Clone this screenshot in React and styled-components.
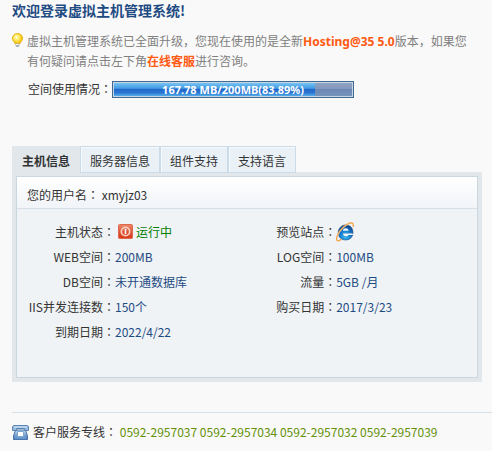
import React, { useState } from "react";
import styled, { createGlobalStyle } from "styled-components";

const GlobalStyle = createGlobalStyle`
  * { box-sizing: border-box; }
  body {
    margin: 0;
    background: #f9f9f9;
    color: #333;
    font: 12px/20px "Noto Sans CJK SC", sans-serif;
  }
`;

const Page = styled.main`
  padding: 0 0 8px 12px;
`;

const Title = styled.h1`
  margin: 0;
  color: #1f4b83;
  font-size: 14px;
  line-height: 20px;
`;

const Hint = styled.div`
  display: flex;
  gap: 4px;
  margin: 11px 20px 0 0;
  color: #808080;

  svg { flex: none; margin-top: 2px; }
  p { margin: 0; }
`;

const Highlight = styled.strong`
  color: #ff5a12;
  font-family: "Noto Sans", "Noto Sans CJK SC", sans-serif;
  line-height: 1;
`;

const HighlightLink = styled.a`
  color: #ff5a12;
  font-weight: bold;
  text-decoration: none;
`;

const ColonMark = styled.span`
  font-family: "Noto Sans CJK TC", sans-serif;
`;

const Colon = () => <ColonMark lang="zh-TW">：</ColonMark>;

const Usage = styled.div`
  display: flex;
  align-items: center;
  padding: 8px 0 0 16px;
`;

const Bar = styled.div`
  display: grid;
  width: 242px;
  height: 17px;
  border: 1px solid #416a93;
  background: linear-gradient(#93a5c3, #8299bd 45%, #6b88b3 50%, #7898be);
  box-shadow: inset 0 0 0 1px #c5d5e3;
`;

const BarFill = styled.div`
  grid-area: 1 / 1;
  margin: 1px;
  background: linear-gradient(#77c3f2, #439ce3 40%, #2369ca 50%, #2b76d2 75%, #55aee9);
`;

const BarText = styled.div`
  grid-area: 1 / 1;
  color: #fff;
  font: bold 11px/15px "Noto Sans", sans-serif;
  text-align: center;
  z-index: 1;
`;

const Tabs = styled.div`
  display: flex;
  margin-top: 47px;
`;

const Tab = styled.button`
  height: 27px;
  padding: 2px 9px 0;
  border: 1px solid ${(p) => (p.$active ? "#e1e7eb" : "#cbdce8")};
  background: ${(p) => (p.$active ? "#e1e7eb" : "#e9f1f7")};
  box-shadow: ${(p) => (p.$active ? "none" : "inset 1px 1px 0 #f7fafc")};
  color: #333;
  font: inherit;
  font-weight: ${(p) => (p.$active ? "bold" : "normal")};
  cursor: pointer;
`;

const Panel = styled.section`
  margin-right: 10px;
  padding: 4px;
  margin-top: -1px;
  background: #e1e7eb;
`;

const PanelBody = styled.div`
  min-height: 202px;
  border: 1px solid #cbd7df;
  background: #eff3f6;
`;

const UserRow = styled.div`
  padding: 8px 10px 3px;
  border-bottom: 1px solid #d7e0e9;
  background: linear-gradient(#fff, #f1f4f8);
`;

const Details = styled.dl`
  display: grid;
  grid-template-columns: 98px 7fr 98px 8fr;
  grid-auto-rows: 25px;
  align-items: center;
  margin: 0;
  padding: 10px 0 0;
  white-space: nowrap;
`;

const Label = styled.dt`
  text-align: right;
`;

const Value = styled.dd`
  display: flex;
  align-items: center;
  gap: 3px;
  margin: 0;
  padding-left: ${(p) => (p.$icon ? "3px" : "0")};
  color: ${(p) => (p.$running ? "#008000" : "#1f4b83")};
`;

const SiteLink = styled.a`
  display: flex;
`;

const Footer = styled.footer`
  display: flex;
  align-items: center;
  gap: 4px;
  margin-top: 30px;
  padding-top: 9px;
  border-top: 1px solid #d8e1ea;
  white-space: nowrap;
`;

const Phones = styled.span`
  color: #64910a;
`;

const BulbIcon = () => (
  <svg width="11" height="15" viewBox="0 0 11 15" aria-hidden="true">
    <defs>
      <radialGradient id="bulb" cx=".4" cy=".35" r=".65">
        <stop offset="0" stopColor="#fffde0" />
        <stop offset=".45" stopColor="#ffe95a" />
        <stop offset="1" stopColor="#f7b500" />
      </radialGradient>
    </defs>
    <path d="M5.5 .6C2.600.6.5 2.600.5 5.300c0 1.900 1.100 3.200 2.500 4.700v1h5v-1c1.400-1.500 2.500-2.800 2.500-4.700 0-2.700-2.100-4.700-5-4.700Z" fill="url(#bulb)" stroke="#e9a900" strokeWidth=".9" />
    <path d="M3.500 10.500h4v2L6.500 14h-2l-1-1.500Z" fill="#a8b0b9" />
    <path d="M3.500 11.500h4" stroke="#eef2f5" />
  </svg>
);

const PowerIcon = () => (
  <svg width="15" height="15" viewBox="0 0 15 15" role="img" aria-label="停止">
    <defs>
      <linearGradient id="power" x2="0" y2="1">
        <stop offset="0" stopColor="#ef8a6c" />
        <stop offset=".5" stopColor="#df5435" />
        <stop offset="1" stopColor="#d93a19" />
      </linearGradient>
    </defs>
    <rect x=".5" y=".5" width="14" height="14" rx="1" fill="url(#power)" stroke="#dc6a50" />
    <circle cx="7.500" cy="7.500" r="4.200" fill="none" stroke="#f8cfc2" strokeWidth="1.700" />
    <path d="M7.500 5v5" stroke="#fff" strokeWidth="1.600" />
  </svg>
);

const BrowserIcon = () => (
  <svg width="18" height="20" viewBox="0 0 18 20" role="img" aria-label="预览">
    <defs>
      <radialGradient id="globe" cx=".5" cy=".75" r=".75">
        <stop offset="0" stopColor="#35c4f5" />
        <stop offset=".55" stopColor="#1677cc" />
        <stop offset="1" stopColor="#123c7c" />
      </radialGradient>
    </defs>
    <path d="M17 11.500H7c.2 3.200 4.400 3.600 5.400 1.500h4.300c-1 3.200-3.700 5-7 5-4.400 0-7.500-3-7.500-7.200 0-4.600 3.400-7.900 7.600-7.900 4.500 0 7.500 3.200 7.200 8.600Z" fill="url(#globe)" stroke="#174a86" strokeWidth=".6" />
    <path d="M6.900 8.800h5.700c-.2-3.300-5.400-3.300-5.700 0ZM7 11.500h9.600l-.2 1.500h-4c-1 2.100-5.200 1.700-5.400-1.500Z" fill="#e9f7ff" />
    <path d="M17 5C18 1.500 16.500.7 14.600 1 9.500 1.800 2.200 9.600.9 14.800.2 17.800 1 19.300 3 18.700c.9-.3 1.700-.8 2.500-1.300" fill="none" stroke="#f4a044" strokeWidth="1.300" />
    <path d="M13.500 1.500C9 3.500 3.500 9 1.500 14" fill="none" stroke="#ffe0a3" strokeWidth=".6" />
  </svg>
);

const PhoneIcon = () => (
  <svg width="17" height="15" viewBox="0 0 17 15" aria-hidden="true">
    <defs>
      <linearGradient id="phone" x2="0" y2="1">
        <stop offset="0" stopColor="#c6dcf0" />
        <stop offset="1" stopColor="#3f73b3" />
      </linearGradient>
    </defs>
    <path d="M1.500 14.500V11l2-6h10l2 6v3.500Z" fill="url(#phone)" stroke="#4674ab" />
    <path d="M.5 1.500 2 .5h13l1.500 1v4h-4v-2h-8v2h-4Z" fill="#94b9df" stroke="#5b83b3" />
    <path d="M2 2h13" stroke="#dcebf8" />
    <path d="M5.500 6.500h6v5h-6Z" fill="#fff" stroke="#7ea7d3" />
    <path d="M3 13h11" stroke="#7daae0" />
  </svg>
);

const TABS = ["主机信息", "服务器信息", "组件支持", "支持语言"];
const USED_PERCENT = 83.89;

export default function App() {
  const [active, setActive] = useState(0);
  return (
    <Page lang="zh-CN">
      <GlobalStyle />
      <Title>欢迎登录虚拟主机管理系统!</Title>
      <Hint>
        <BulbIcon />
        <p>
          虚拟主机管理系统已全面升级，您现在使用的是全新<Highlight>Hosting@35 5.0</Highlight>版本，如果您有何疑问请点击左下角<HighlightLink href="#service">在线客服</HighlightLink>进行咨询。
        </p>
      </Hint>
      <Usage>
        <span>空间使用情况<Colon /></span>
        <Bar role="progressbar" aria-label="空间使用情况" aria-valuenow={USED_PERCENT}>
          <BarFill style={{ width: `${USED_PERCENT}%` }} />
          <BarText>167.78 MB/200MB(83.89%)</BarText>
        </Bar>
      </Usage>
      <Tabs role="tablist">
        {TABS.map((name, i) => (
          <Tab key={name} type="button" role="tab" aria-selected={i === active} $active={i === active} onClick={() => setActive(i)}>
            {name}
          </Tab>
        ))}
      </Tabs>
      <Panel role="tabpanel">
        <PanelBody>
          <UserRow>您的用户名<Colon /> xmyjz03</UserRow>
          <Details>
            <Label>主机状态<Colon /></Label>
            <Value $icon $running><PowerIcon />运行中</Value>
            <Label>预览站点<Colon /></Label>
            <Value><SiteLink href="#preview"><BrowserIcon /></SiteLink></Value>
            <Label>WEB空间<Colon /></Label>
            <Value>200MB</Value>
            <Label>LOG空间<Colon /></Label>
            <Value>100MB</Value>
            <Label>DB空间<Colon /></Label>
            <Value>未开通数据库</Value>
            <Label>流量<Colon /></Label>
            <Value>5GB /月</Value>
            <Label>IIS并发连接数<Colon /></Label>
            <Value>150个</Value>
            <Label>购买日期<Colon /></Label>
            <Value>2017/3/23</Value>
            <Label>到期日期<Colon /></Label>
            <Value>2022/4/22</Value>
          </Details>
        </PanelBody>
      </Panel>
      <Footer>
        <PhoneIcon />
        <span>
          客户服务专线<Colon /> <Phones>0592-2957037 0592-2957034 0592-2957032 0592-2957039</Phones>
        </span>
      </Footer>
    </Page>
  );
}
